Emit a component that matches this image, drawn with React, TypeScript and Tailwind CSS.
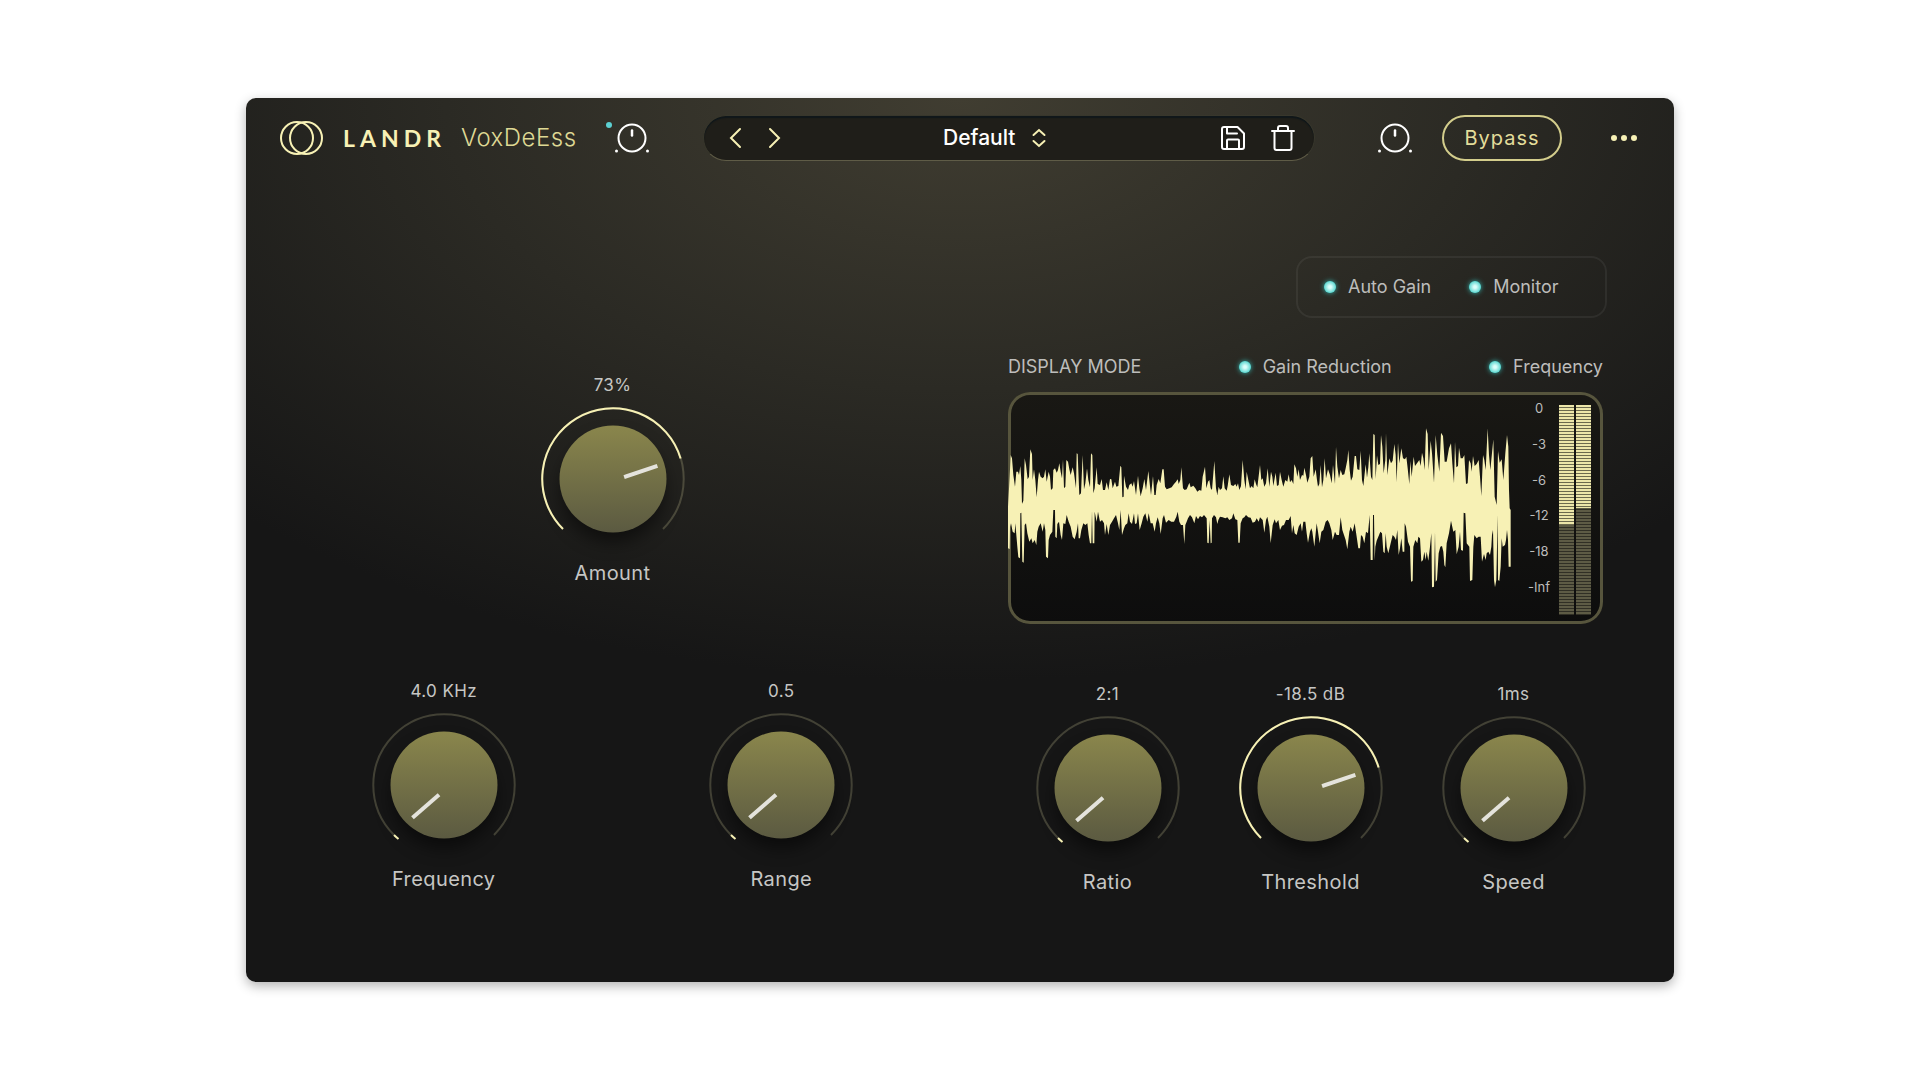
import { useId, useState } from 'react';
import type { ReactNode } from 'react';

const WAVE_TOP =
  '24,380 29,290 32,225 36,235 40,285 45,320 49,275 54,275 57,285 61,258 64,300 66,372 70,362 72,300 74,235 78,255 83,298 87,290 91,208 96,222 98,300 102,268 106,300 110,352 114,300 117,275 122,290 128,295 132,290 136,268 140,305 146,275 150,290 153,330 158,325 160,270 165,265 170,278 174,270 178,250 182,275 186,295 189,238 192,325 196,320 199,240 204,245 208,268 212,285 218,262 222,280 228,325 230,220 233,222 238,345 243,340 248,225 252,328 256,310 261,265 265,300 270,322 273,220 277,225 280,340 284,325 290,262 293,312 300,315 305,297 309,330 315,330 320,307 325,330 330,297 334,298 338,325 345,305 349,320 355,318 361,257 364,262 367,352 371,350 372,287 378,320 384,330 388,315 394,310 398,320 402,303 408,345 414,287 418,325 422,348 428,325 433,297 438,330 445,273 449,310 453,345 459,288 463,345 467,345 470,315 476,297 481,310 487,268 491,268 495,320 500,328 508,325 515,322 522,312 528,305 533,298 536,312 541,300 544,262 549,325 554,330 560,328 568,308 572,322 580,317 586,325 592,335 598,330 604,332 608,290 615,260 619,325 624,305 628,300 632,325 636,330 643,243 648,325 652,345 656,320 660,330 666,325 670,289 674,325 680,332 683,318 688,283 693,315 700,318 706,312 710,320 714,310 718,330 723,318 728,240 733,300 737,328 740,275 745,300 750,325 755,318 760,325 764,298 768,312 772,322 780,255 784,300 788,295 793,320 798,310 803,265 808,320 813,275 817,290 820,318 827,278 831,318 836,315 840,275 845,300 850,320 856,300 862,305 866,283 870,307 875,300 880,312 883,253 888,265 892,290 896,268 900,300 906,285 910,287 913,263 918,285 922,308 928,290 932,235 937,228 941,290 947,268 951,300 954,320 958,312 962,255 966,322 970,300 974,235 978,295 984,268 990,285 995,310 999,255 1005,312 1008,200 1012,260 1017,295 1022,270 1027,285 1033,283 1037,265 1042,240 1045,210 1049,270 1053,302 1058,290 1064,228 1068,228 1072,268 1078,270 1082,212 1086,300 1090,318 1093,290 1097,253 1101,293 1105,262 1108,220 1113,290 1117,300 1120,162 1124,165 1127,297 1131,226 1135,255 1140,252 1143,165 1147,200 1151,280 1156,240 1158,160 1162,285 1168,235 1173,250 1178,242 1183,192 1187,225 1190,307 1194,188 1198,250 1204,205 1209,235 1215,238 1219,230 1223,265 1228,312 1231,243 1235,290 1241,230 1245,258 1251,250 1258,240 1262,258 1266,218 1270,235 1274,270 1278,145 1283,162 1286,270 1292,182 1296,220 1302,308 1307,165 1312,225 1318,275 1323,158 1329,168 1334,245 1340,245 1347,205 1353,190 1357,250 1362,310 1365,185 1369,262 1374,258 1377,203 1382,235 1388,235 1393,225 1398,312 1403,310 1407,240 1412,250 1415,275 1419,228 1424,258 1430,252 1436,240 1440,290 1444,348 1449,225 1453,240 1457,270 1463,145 1467,225 1471,270 1480,178 1484,350 1490,375 1494,213 1499,248 1505,238 1510,300 1516,220 1521,165 1525,200 1527,330 1529,385 1532,390 1532,560';

const WAVE_BOTTOM =
  '1526,560 1524,480 1521,450 1518,480 1515,495 1508,500 1505,475 1502,560 1498,603 1494,600 1493,405 1489,600 1485,622 1482,600 1479,450 1476,465 1474,500 1470,525 1465,515 1460,520 1457,540 1452,522 1446,545 1442,470 1436,470 1430,475 1423,465 1420,500 1417,600 1410,603 1408,500 1400,490 1396,400 1391,398 1389,512 1383,510 1380,455 1376,500 1370,523 1366,450 1360,455 1353,422 1347,460 1340,490 1336,562 1333,555 1330,515 1326,498 1321,500 1316,520 1311,600 1307,605 1305,455 1302,620 1296,622 1294,460 1290,500 1285,542 1280,515 1277,540 1273,515 1269,540 1264,545 1260,475 1255,470 1252,490 1246,480 1240,500 1238,603 1233,605 1230,500 1224,485 1218,440 1214,430 1213,515 1208,515 1204,475 1200,505 1196,525 1192,450 1188,480 1183,470 1178,465 1172,490 1165,520 1160,500 1157,460 1154,520 1150,515 1146,460 1141,455 1135,470 1130,482 1126,500 1124,542 1122,405 1119,405 1118,540 1112,540 1109,405 1104,460 1098,455 1093,490 1088,470 1083,465 1080,505 1075,505 1070,470 1064,430 1058,455 1052,440 1048,455 1042,508 1037,480 1032,465 1027,450 1022,412 1017,465 1010,465 1005,455 998,480 994,450 988,430 983,420 977,425 970,450 964,455 959,490 954,455 950,430 943,500 937,455 934,445 930,455 924,488 920,460 916,425 910,425 906,455 902,430 896,440 890,465 884,460 880,435 876,460 872,408 866,420 858,420 852,435 846,437 840,450 835,420 828,430 824,418 818,435 812,490 808,440 802,410 798,420 793,458 788,420 780,412 776,425 770,415 765,425 758,428 752,413 745,412 738,405 733,412 728,415 722,430 719,488 715,488 712,420 706,418 700,400 696,415 688,420 682,412 676,415 668,412 660,410 655,420 652,432 648,412 642,405 636,415 635,488 632,490 629,420 626,490 622,488 620,415 612,405 606,412 600,408 594,418 588,408 583,430 576,412 570,405 564,415 560,425 556,435 553,492 549,435 543,435 538,425 533,395 529,410 522,425 514,425 506,420 498,428 492,405 488,415 482,462 478,430 473,412 468,430 464,455 458,430 452,430 446,400 442,425 436,400 430,410 425,430 419,450 414,400 410,430 405,432 402,400 396,432 390,425 386,400 382,430 376,435 372,445 366,465 362,390 358,450 354,430 348,405 342,415 336,425 330,435 325,465 320,432 315,465 312,430 306,420 300,425 294,395 290,425 284,395 283,490 278,490 276,392 274,490 270,490 266,465 262,430 256,435 250,430 244,450 240,475 236,475 234,430 230,455 224,478 218,470 212,440 206,425 200,405 196,432 190,430 186,480 182,465 177,425 172,432 170,475 166,470 165,390 160,390 157,455 150,465 146,480 144,535 138,530 136,450 132,430 128,455 122,430 116,440 112,455 109,495 104,480 98,490 94,475 88,485 82,460 78,430 74,435 71,548 67,545 64,398 61,400 60,535 55,532 52,500 46,430 44,460 38,455 33,430 30,440 29,507 24,505';

const METER_TICKS = ['0', '-3', '-6', '-12', '-18', '-Inf'];

interface KnobProps {
  label: string;
  display: string;
  raised?: boolean;
}

function Knob({ label, display, raised = false }: KnobProps) {
  const id = useId();
  const [value, setValue] = useState(raised ? 73 : 0);
  return (
    <div className="flex flex-col items-center gap-2.5 tracking-wide text-[#c6c6c4]">
      <output htmlFor={id} className="text-[17px] leading-6">
        {display}
      </output>
      <div className="relative size-36 rounded-full focus-within:ring-1 focus-within:ring-[#f7f1b5]">
        <svg viewBox="-72 -72 144 144" className="size-36 overflow-visible" fill="none" aria-hidden>
          <defs>
            <linearGradient id={`${id}-face`} x1="0" y1="0" x2="0" y2="1">
              <stop offset="0" stopColor="#8a864c" />
              <stop offset="1" stopColor="#5b5a41" />
            </linearGradient>
            <filter id={`${id}-shadow`} x="-50%" y="-50%" width="200%" height="200%">
              <feGaussianBlur stdDeviation="9" />
            </filter>
          </defs>
          <circle cy="11" r="52" fill="#000" opacity="0.5" filter={`url(#${id}-shadow)`} />
          <path d="M-50 50A70.7 70.7 0 1 1 50 50" stroke="#f7f1b5" strokeOpacity="0.2" strokeWidth="2" />
          {raised ? (
            <path d="M-50 50A70.7 70.7 0 1 1 67.6 -20.5" stroke="#f7f1b5" strokeWidth="2" />
          ) : (
            <path d="M-45.5 54A70.7 70.7 0 0 1 -50 50" stroke="#f7f1b5" strokeWidth="2" />
          )}
          <circle r="53.5" fill={`url(#${id}-face)`} />
          <path
            d={raised ? 'M13 -2.500L42.500 -12.500' : 'M-6.500 11L-30 31.500'}
            stroke="#e4e3dc"
            strokeWidth="4"
            strokeLinecap="square"
          />
        </svg>
        <input
          id={id}
          type="range"
          value={value}
          onChange={(e) => setValue(Number(e.target.value))}
          className="absolute inset-0 size-full cursor-pointer opacity-0"
        />
      </div>
      <label htmlFor={id} className="text-xl leading-6">
        {label}
      </label>
    </div>
  );
}

function Led({ children }: { children: ReactNode }) {
  return (
    <label className="flex items-center gap-3 text-lg leading-6 text-[#bdbdbb]">
      <input
        type="checkbox"
        defaultChecked
        className="size-3 appearance-none rounded-full bg-[#3c4a48] checked:bg-[radial-gradient(circle,#dcfffb_15%,#4fd3cc_75%)] checked:shadow-[0_0_5px_#35b5b0]"
      />
      {children}
    </label>
  );
}

function KnobIcon() {
  return (
    <svg viewBox="0 0 36 36" className="size-9" fill="none" aria-hidden>
      <circle cx="18" cy="18" r="13.5" stroke="#fff" strokeWidth="2" />
      <path d="M18 10.5V15.5" stroke="#fff" strokeWidth="2.5" strokeLinecap="round" />
      <circle cx="2.5" cy="31" r="1.5" fill="#fff" />
      <circle cx="33.5" cy="31" r="1.5" fill="#fff" />
    </svg>
  );
}

function Logo() {
  return (
    <svg viewBox="0 0 43 34" className="h-[34px] w-[43px]" fill="none" stroke="#f7f1b5" strokeWidth="2" aria-hidden>
      <circle cx="17" cy="17" r="16" />
      <circle cx="26" cy="17" r="16" />
    </svg>
  );
}

function PresetBar() {
  return (
    <div className="flex h-[46px] flex-1 items-center justify-between rounded-full border border-[#38372c] border-b-[#5f5c47] bg-[#1f1e19] pr-[18px] pl-[15px] shadow-[inset_0_2px_1px_#10171a]">
      <div className="flex gap-2">
        <button type="button" aria-label="Previous preset" className="p-1">
          <svg viewBox="0 0 24 24" className="size-6" fill="none" stroke="#f7f1b5" strokeWidth="2" aria-hidden>
            <path d="M17 3L8 12L17 21" strokeLinecap="round" />
          </svg>
        </button>
        <button type="button" aria-label="Next preset" className="p-1">
          <svg viewBox="0 0 24 24" className="size-6" fill="none" stroke="#f7f1b5" strokeWidth="2" aria-hidden>
            <path d="M7 3L16 12L7 21" strokeLinecap="round" />
          </svg>
        </button>
      </div>
      <button type="button" className="flex items-center gap-4 pr-5 text-[21px] font-medium text-white">
        Default
        <svg viewBox="0 0 16 20" className="h-5 w-4" fill="none" stroke="#f7f1b5" strokeWidth="2" aria-hidden>
          <path d="M2.5 7L8 2L13.5 7M2.5 13L8 18L13.5 13" strokeLinecap="round" />
        </svg>
      </button>
      <div className="flex items-center gap-6">
        <button type="button" aria-label="Save preset">
          <svg viewBox="0 0 26 26" className="size-[26px]" fill="none" stroke="#fff" strokeWidth="2" strokeLinejoin="round" aria-hidden>
            <path d="M4 2H17.5L24 8.5V22A2 2 0 0 1 22 24H4A2 2 0 0 1 2 22V4A2 2 0 0 1 4 2Z" />
            <path d="M7 2V8.5H17M7 24V15.5A1 1 0 0 1 8 14.5H18A1 1 0 0 1 19 15.5V24" strokeLinecap="round" />
          </svg>
        </button>
        <button type="button" aria-label="Delete preset">
          <svg viewBox="0 0 26 28" className="h-7 w-[26px]" fill="none" stroke="#fff" strokeWidth="2" strokeLinejoin="round" aria-hidden>
            <path d="M2 7H24M4.500 7V24A2 2 0 0 0 6.500 26H19.500A2 2 0 0 0 21.500 24V7" strokeLinecap="round" />
            <path d="M8 7V4A2 2 0 0 1 10 2H16A2 2 0 0 1 18 4V7" />
          </svg>
        </button>
      </div>
    </div>
  );
}

function Header() {
  return (
    <header className="flex h-20 items-center px-[34px]">
      <Logo />
      <span className="ml-5 font-['Lato'] text-[23px] font-bold tracking-[5px] text-[#f7f1b5]">LANDR</span>
      <h1 className="ml-[15px] text-2xl font-light tracking-[0.5px] text-[#ded894]">VoxDeEss</h1>
      <button type="button" aria-label="Input gain" className="relative mr-[53px] ml-[37px]">
        <KnobIcon />
        <span className="absolute top-0.5 -left-2 size-1.5 rounded-full bg-[#5cd0d2]" />
      </button>
      <PresetBar />
      <button type="button" aria-label="Output gain" className="ml-[62px]">
        <KnobIcon />
      </button>
      <button
        type="button"
        className="ml-[29px] h-[46px] w-[120px] rounded-full border-2 border-[#d3cd8c] text-xl tracking-[1px] text-[#e3dd9a]"
      >
        Bypass
      </button>
      <button type="button" aria-label="More options" className="ml-[46px] flex gap-1 p-[3px]">
        <span className="size-1.5 rounded-full bg-[#f7f1b5]" />
        <span className="size-1.5 rounded-full bg-[#f7f1b5]" />
        <span className="size-1.5 rounded-full bg-[#f7f1b5]" />
      </button>
    </header>
  );
}

function MeterBar({ unlit }: { unlit: string }) {
  return (
    <div className="flex h-[210px] w-[15px] flex-col bg-[repeating-linear-gradient(#ece6a9_0px,#ece6a9_2px,#6b694d_2px,#6b694d_3px)]">
      <div className="mt-auto bg-[#11110f]/65" style={{ height: unlit }} />
    </div>
  );
}

function WaveDisplay() {
  return (
    <div className="mr-3 ml-0.5 flex rounded-[22px] bg-linear-to-b from-[#191814] to-[#0d0d0d] pr-3 shadow-[inset_0_0_0_3px_#57553d]">
      <svg
        viewBox="24 36 1509 696"
        preserveAspectRatio="none"
        className="h-[232px] min-w-0 flex-1"
        role="img"
        aria-label="Waveform"
      >
        <polygon points={`${WAVE_TOP} ${WAVE_BOTTOM}`} fill="#f7f1b5" />
      </svg>
      <div className="mt-1.5 flex h-[199px] w-12 flex-col justify-between pl-2 text-center text-[13px] leading-5 text-[#bdbdbb]">
        {METER_TICKS.map((tick) => (
          <span key={tick}>{tick}</span>
        ))}
      </div>
      <div className="mt-[13px] flex gap-0.5">
        <MeterBar unlit="43%" />
        <MeterBar unlit="51%" />
      </div>
    </div>
  );
}

export default function App() {
  return (
    <main className="flex min-h-screen items-center justify-center bg-white px-6 font-['Inter',sans-serif]">
      <section className="w-full max-w-[1428px] rounded-[10px] bg-[#161616] bg-[radial-gradient(ellipse_72%_66%_at_50%_0%,#403d31_0%,#2b2a24_50%,#161616_100%)] shadow-[0_4px_12px_rgba(0,0,0,0.3)]">
        <Header />
        <div className="grid grid-cols-[676fr_608fr] gap-14 pr-[59px] pb-[88px] pl-[29px]">
          <div className="flex flex-col gap-[94px] pt-[195px]">
            <Knob label="Amount" display="73%" raised />
            <div className="grid grid-cols-2">
              <Knob label="Frequency" display="4.0 KHz" />
              <Knob label="Range" display="0.5" />
            </div>
          </div>
          <div className="flex flex-col pt-[78px]">
            <div className="mr-2 flex h-[62px] w-[311px] items-center gap-[38px] self-end rounded-2xl border-2 border-white/6 pl-[26px]">
              <Led>Auto Gain</Led>
              <Led>Monitor</Led>
            </div>
            <div className="mt-[37px] mr-3 ml-0.5 flex justify-between">
              <span className="text-lg leading-6 text-[#bdbdbb]">DISPLAY MODE</span>
              <Led>Gain Reduction</Led>
              <Led>Frequency</Led>
            </div>
            <div className="mt-[13px]">
              <WaveDisplay />
            </div>
            <div className="mt-[58px] grid grid-cols-3">
              <Knob label="Ratio" display="2:1" />
              <Knob label="Threshold" display="-18.5 dB" raised />
              <Knob label="Speed" display="1ms" />
            </div>
          </div>
        </div>
      </section>
    </main>
  );
}
